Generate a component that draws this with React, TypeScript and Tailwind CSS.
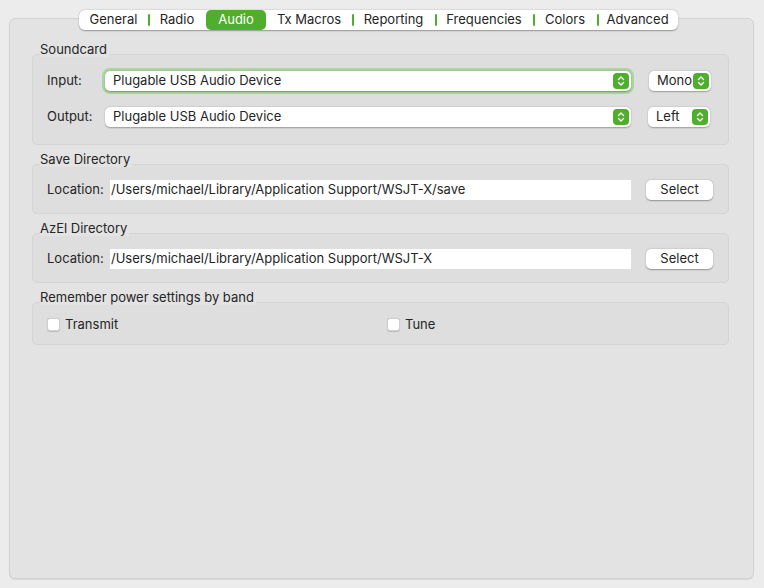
import React from 'react';

const tabs = [
  { name: 'General', w: 'w-[69px]', sep: false },
  { name: 'Radio', w: 'w-[58px]', sep: true },
  { name: 'Audio', w: 'w-[60px]', sep: false },
  { name: 'Tx Macros', w: 'w-[86px]', sep: false },
  { name: 'Reporting', w: 'w-[83px]', sep: true },
  { name: 'Frequencies', w: 'w-[98px]', sep: true },
  { name: 'Colors', w: 'w-[64px]', sep: true },
  { name: 'Advanced', w: 'w-[81px]', sep: true },
];

function Stepper() {
  return (
    <div className="flex h-[16px] w-[16px] items-center justify-center rounded-[4px] bg-[#4fae2c]">
      <svg width="8" height="12" viewBox="0 0 8 12" fill="none">
        <path d="M1.5 4.5L4 2L6.5 4.5" stroke="white" strokeWidth="1.4" strokeLinecap="round" strokeLinejoin="round" />
        <path d="M1.5 7.5L4 10L6.5 7.5" stroke="white" strokeWidth="1.4" strokeLinecap="round" strokeLinejoin="round" />
      </svg>
    </div>
  );
}

function Combo({ value, className }: { value: string; className: string }) {
  return (
    <div
      className={`flex h-[20px] items-center justify-between rounded-[5px] bg-white pl-[8px] pr-[2px] shadow-[0_0.5px_1.5px_rgba(0,0,0,0.3)] ${className}`}
    >
      <span>{value}</span>
      <Stepper />
    </div>
  );
}

function Group({ title, children, className }: { title: string; children: React.ReactNode; className: string }) {
  return (
    <div className="flex flex-col">
      <div className="ml-[8px] flex h-[14px] items-end">
        <span className="relative z-10 -mb-[3px] bg-[#e3e3e3] pr-[2px] leading-[16px]">{title}</span>
      </div>
      <div className={`rounded-[5px] border border-[#d4d4d4] bg-[#dedede] ${className}`}>{children}</div>
    </div>
  );
}

function Checkbox({ label }: { label: string }) {
  return (
    <div className="flex items-center gap-[5px]">
      <div className="h-[13px] w-[13px] rounded-[3px] border border-[#cfcfcf] bg-white shadow-[0_0.5px_1px_rgba(0,0,0,0.15)]" />
      <span>{label}</span>
    </div>
  );
}

export default function App() {
  return (
    <div
      className="h-[588px] w-[764px] bg-[#ececec] pl-[9px] pr-[10px] pt-[18px] pb-[9px] text-[13px] text-[#252525]"
      style={{ fontFamily: 'Inter, "Liberation Sans", sans-serif' }}
    >
      <div className="flex h-full flex-col rounded-[6px] border border-[#d2d2d2] bg-[#e3e3e3] shadow-[0_1px_1px_rgba(0,0,0,0.08)]">
        <div className="-mt-[9px] ml-[69px] flex h-[20px] self-start rounded-[6px] bg-white shadow-[0_0.5px_1.5px_rgba(0,0,0,0.35)]">
          {tabs.map((t) => {
            const active = t.name === 'Audio';
            return (
              <div
                key={t.name}
                className={`relative flex h-[20px] items-center justify-center ${t.w} ${
                  active ? 'rounded-[5px] bg-[#4fae2c] text-white' : ''
                }`}
              >
                {t.sep && <div className="absolute left-0 top-[4px] h-[12px] w-[1.5px] rounded-full bg-[#4fae2c]" />}
                {t.name}
              </div>
            );
          })}
        </div>

        <div className="ml-[22px] mr-[24px] mt-[10px] flex flex-col gap-[5px]">
          <Group title="Soundcard" className="flex flex-col gap-[16px] pl-[14px] pr-[16px] pt-[16px] pb-[17px]">
            <div className="flex items-center">
              <span className="w-[58px]">Input:</span>
              <div className="-m-[3px] rounded-[8px] bg-[#acd5a0] p-[3px]">
                <Combo value="Plugable USB Audio Device" className="w-[526px]" />
              </div>
              <Combo value="Mono" className="ml-[18px] w-[62px]" />
            </div>
            <div className="flex items-center">
              <span className="w-[58px]">Output:</span>
              <Combo value="Plugable USB Audio Device" className="w-[526px]" />
              <Combo value="Left" className="ml-[17px] w-[62px]" />
            </div>
          </Group>

          <Group title="Save Directory" className="flex items-center pl-[14px] pt-[15px] pb-[13px]">
            <span className="w-[63px]">Location:</span>
            <div className="flex h-[20px] w-[521px] items-center bg-white pl-[1px]">
              /Users/michael/Library/Application Support/WSJT-X/save
            </div>
            <button className="ml-[15px] h-[20px] w-[67px] rounded-[5px] bg-white shadow-[0_0.5px_1.5px_rgba(0,0,0,0.35)]">Select</button>
          </Group>

          <Group title="AzEl Directory" className="flex items-center pl-[14px] pt-[15px] pb-[13px]">
            <span className="w-[63px]">Location:</span>
            <div className="flex h-[20px] w-[521px] items-center bg-white pl-[1px]">
              /Users/michael/Library/Application Support/WSJT-X
            </div>
            <button className="ml-[15px] h-[20px] w-[67px] rounded-[5px] bg-white shadow-[0_0.5px_1.5px_rgba(0,0,0,0.35)]">Select</button>
          </Group>

          <Group title="Remember power settings by band" className="flex items-center pl-[14px] pt-[12px] pb-[9px]">
            <div className="w-[340px]">
              <Checkbox label="Transmit" />
            </div>
            <Checkbox label="Tune" />
          </Group>
        </div>
      </div>
    </div>
  );
}
